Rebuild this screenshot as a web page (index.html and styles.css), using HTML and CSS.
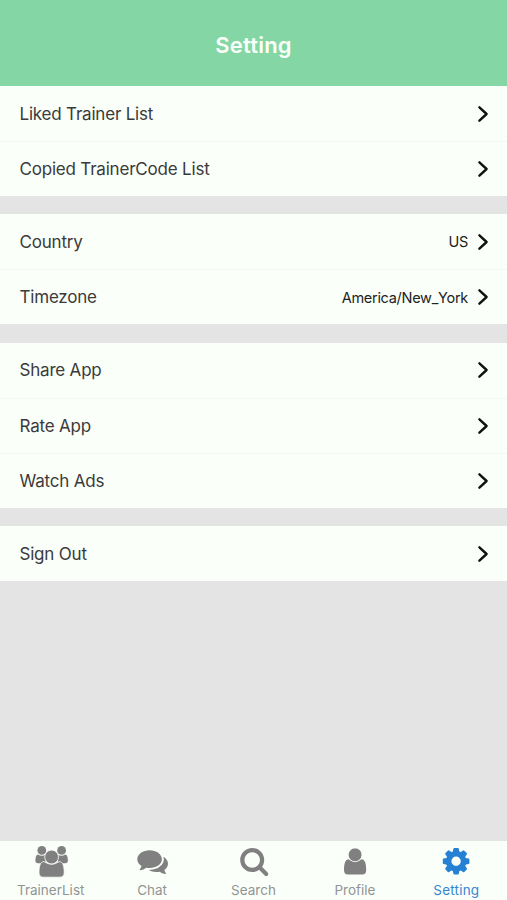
FILE: index.html
```html
<!DOCTYPE html>
<html lang="en">
<head>
    <meta charset="UTF-8">
    <meta name="viewport" content="width=device-width, initial-scale=1.0">
    <title>Setting</title>
    <link rel="stylesheet" href="styles.css">
</head>
<body>
    <!-- Shared chevron -->
    <svg class="symbols">
        <symbol id="chevron" viewBox="0 0 12 18">
            <path d="M2.4 2.3 L9.6 9 L2.4 15.7"/>
        </symbol>
    </svg>

    <header class="header">
        <h1 class="header-title">Setting</h1>
    </header>

    <main class="settings">
        <div class="group">
            <a class="row"><span class="row-label">Liked Trainer List</span><svg class="chevron"><use href="#chevron"/></svg></a>
            <a class="row"><span class="row-label">Copied TrainerCode List</span><svg class="chevron"><use href="#chevron"/></svg></a>
        </div>
        <div class="group">
            <a class="row"><span class="row-label">Country</span><span class="row-value">US</span><svg class="chevron"><use href="#chevron"/></svg></a>
            <a class="row"><span class="row-label">Timezone</span><span class="row-value">America/New_York</span><svg class="chevron"><use href="#chevron"/></svg></a>
        </div>
        <div class="group">
            <a class="row"><span class="row-label">Share App</span><svg class="chevron"><use href="#chevron"/></svg></a>
            <a class="row"><span class="row-label">Rate App</span><svg class="chevron"><use href="#chevron"/></svg></a>
            <a class="row"><span class="row-label">Watch Ads</span><svg class="chevron"><use href="#chevron"/></svg></a>
        </div>
        <div class="group">
            <a class="row"><span class="row-label">Sign Out</span><svg class="chevron"><use href="#chevron"/></svg></a>
        </div>
    </main>

    <nav class="tabs">
        <a class="tab">
            <svg class="tab-icon" viewBox="0 0 36 32">
                <circle cx="8.8" cy="5.4" r="4.4"/>
                <circle cx="28.6" cy="5.4" r="4.4"/>
                <path d="M5 9.4 Q8.5 12 12.5 9.8 L12.5 18.2 H5 Q2.4 18.2 2.4 15.5 Q2.4 10 5 9.4 Z"/>
                <path d="M32.3 9.4 Q28.8 12 24.8 9.8 L24.8 18.2 H32.3 Q34.9 18.2 34.9 15.5 Q34.9 10 32.3 9.4 Z"/>
                <path class="cut" d="M11 16.6 Q18.6 22 26.2 16.6 C30 16.6 31.2 21.5 31.2 27.5 Q31.2 32.2 27 32.2 H10.2 Q6 32.2 6 27.5 C6 21.5 7.2 16.6 11 16.6 Z"/>
                <circle class="cut" cx="18.6" cy="12" r="6.9"/>
            </svg>
            <span class="tab-label">TrainerList</span>
        </a>
        <a class="tab">
            <svg class="tab-icon" viewBox="0 0 36 32">
                <path d="M29.5 11.7 Q34 14.5 34 18.7 Q34 22.3 30.3 25 Q30.6 26.6 32 28.2 Q32 29 31.2 29 Q27.8 28.5 25.6 26.8 Q19 27.9 14.7 25.1 Q26.5 24.3 29.2 17.6 Q30.3 14.7 29.5 11.7 Z"/>
                <path d="M15.6 5.3 C22.4 5.3 27.9 9.2 27.9 14.2 C27.9 19.1 22.4 23 15.6 23 Q14 23 12.3 22.7 Q9.7 24.7 6.2 25.2 Q5.4 25.2 5.7 24.4 Q7.2 23 7.5 21 Q3.3 18.3 3.3 14.2 C3.3 9.2 8.8 5.3 15.6 5.3 Z"/>
            </svg>
            <span class="tab-label">Chat</span>
        </a>
        <a class="tab">
            <svg class="tab-icon outline" viewBox="0 0 36 32">
                <circle cx="16.2" cy="15" r="9.9"/>
                <path d="M23.5 22.3 L30.2 29"/>
            </svg>
            <span class="tab-label">Search</span>
        </a>
        <a class="tab">
            <svg class="tab-icon" viewBox="0 0 36 32">
                <path d="M11.5 14.2 Q18.1 19.6 24.7 14.2 C28.2 14.2 29.2 19.5 29.2 25 Q29.2 29.6 25.2 29.6 H11 Q7 29.6 7 25 C7 19.5 8 14.2 11.5 14.2 Z"/>
                <circle class="cut" cx="18.1" cy="9.8" r="6.9"/>
            </svg>
            <span class="tab-label">Profile</span>
        </a>
        <a class="tab active">
            <svg class="tab-icon" viewBox="0 0 36 32">
                <g transform="translate(18.1 16.3)">
                    <circle class="ring" r="7.5"/>
                    <path id="teeth" d="M-3.4 -9 L-2.7 -12.5 Q-2.5 -13.3 -1.7 -13.3 H1.7 Q2.5 -13.3 2.7 -12.5 L3.4 -9 Z M-3.4 9 L-2.7 12.5 Q-2.5 13.3 -1.7 13.3 H1.7 Q2.5 13.3 2.7 12.5 L3.4 9 Z"/>
                    <use href="#teeth" transform="rotate(45)"/>
                    <use href="#teeth" transform="rotate(90)"/>
                    <use href="#teeth" transform="rotate(135)"/>
                </g>
            </svg>
            <span class="tab-label">Setting</span>
        </a>
    </nav>
</body>
</html>
```
FILE: styles.css
```css
* {
    box-sizing: border-box;
}

body {
    margin: 0;
    height: 100vh;
    display: flex;
    flex-direction: column;
    overflow: hidden;
    font-family: Inter, "Liberation Sans", sans-serif;
    background-color: #e4e4e4;
    color: #3a3a3a;
}

.symbols {
    display: none;
}

/* Header */
.header {
    height: 86px;
    flex-shrink: 0;
    padding-top: 4px;
    display: flex;
    align-items: center;
    justify-content: center;
    background-color: #84d7a4;
}

.header-title {
    margin: 0;
    font-size: 22px;
    font-weight: 600;
    line-height: 28px;
    letter-spacing: 0.2px;
    color: #fafffa;
}

/* Settings list */
.settings {
    flex: 1;
    display: flex;
    flex-direction: column;
    gap: 18.4px;
}

.group {
    background-color: #fafffa;
}

.row {
    height: 55px;
    padding: 0 18px 0 19.5px;
    display: flex;
    align-items: center;
}

.row + .row {
    border-top: 1px solid #f4f8f4;
}

.row-label {
    flex: 1;
    font-size: 17px;
    letter-spacing: -0.2px;
}

.row-value {
    margin-right: 9px;
    font-size: 14.5px;
    letter-spacing: -0.28px;
    color: #222;
}

.chevron {
    width: 12px;
    height: 18px;
    fill: none;
    stroke: #111;
    stroke-width: 2.4;
    stroke-linecap: round;
    stroke-linejoin: round;
}

/* Bottom tabs */
.tabs {
    height: 59px;
    flex-shrink: 0;
    display: flex;
    background-color: #fafffa;
}

.tab {
    flex: 1;
    padding-top: 4px;
    display: flex;
    flex-direction: column;
    align-items: center;
    color: #808080;
}

.tab-icon {
    width: 36px;
    height: 32px;
    overflow: visible;
    fill: currentColor;
}

.tab-icon .cut {
    stroke: #fafffa;
    stroke-width: 0.8;
}

.tab-icon.outline {
    fill: none;
    stroke: currentColor;
    stroke-width: 4.2;
    stroke-linecap: round;
}

.ring {
    fill: none;
    stroke: currentColor;
    stroke-width: 5.6;
}

.tab-label {
    margin-top: 5px;
    font-size: 13.5px;
    line-height: 16px;
    color: #929492;
}

.active {
    color: #2680d4;
}

.active .tab-label {
    letter-spacing: 0.2px;
    color: #3587d2;
}
```
